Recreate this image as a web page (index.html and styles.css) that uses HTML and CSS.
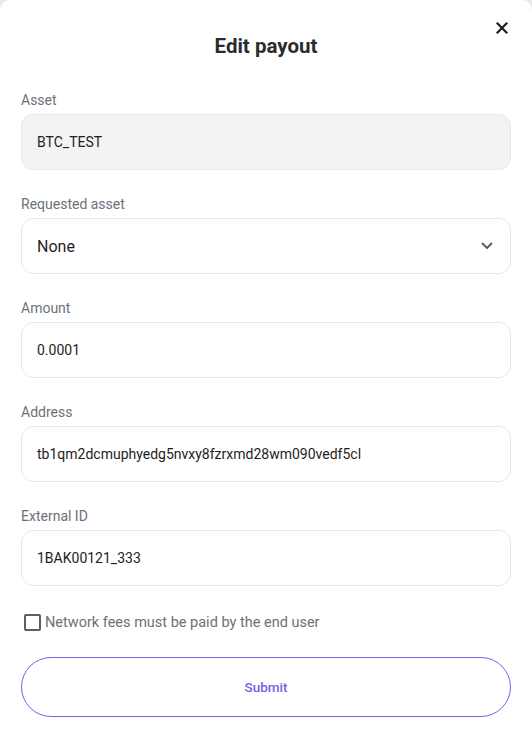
FILE: index.html
```html
<!DOCTYPE html>
<html lang="en">
<head>
<meta charset="utf-8">
<title>Edit payout</title>
<link rel="stylesheet" href="styles.css">
</head>
<body>
<div class="dialog">
  <div class="header">
    <h1 class="title">Edit payout</h1>
    <button class="close" aria-label="Close">
      <svg width="12" height="12" viewBox="0 0 12 12"><path d="M1.5 1.5L10.5 10.5M10.5 1.5L1.5 10.5" stroke="#1f1f1f" stroke-width="2.2" stroke-linecap="square"/></svg>
    </button>
  </div>
  <div class="field">
    <div class="label">Asset</div>
    <div class="box box-disabled">BTC_TEST</div>
  </div>
  <div class="field">
    <div class="label">Requested asset</div>
    <div class="box box-select"><span class="select-value">None</span>
      <svg class="chevron" width="12" height="8" viewBox="0 0 12 8"><path d="M1.5 1.5L6 6L10.5 1.5" fill="none" stroke="#5a5a5a" stroke-width="1.8" stroke-linecap="round" stroke-linejoin="round"/></svg>
    </div>
  </div>
  <div class="field">
    <div class="label">Amount</div>
    <div class="box">0.0001</div>
  </div>
  <div class="field">
    <div class="label">Address</div>
    <div class="box">tb1qm2dcmuphyedg5nvxy8fzrxmd28wm090vedf5cl</div>
  </div>
  <div class="field">
    <div class="label">External ID</div>
    <div class="box">1BAK00121_333</div>
  </div>
  <label class="check-row"><span class="checkbox"></span><span class="check-text">Network fees must be paid by the end user</span></label>
  <button class="submit">Submit</button>
</div>
</body>
</html>
```
FILE: styles.css
```css
* { box-sizing: border-box; }
html, body { margin: 0; padding: 0; }
body {
  background: #e9e9e9;
  font-family: Roboto, "Liberation Sans", Arial, sans-serif;
  width: 532px;
  height: 746px;
}
.dialog {
  background: #ffffff;
  border-radius: 10px 10px 0 0;
  width: 532px;
  height: 746px;
  padding: 30px 21px 0 21px;
}
.header {
  position: relative;
  height: 32px;
  margin-bottom: 28px;
}
.title {
  margin: 0;
  text-align: center;
  font-size: 20.5px;
  line-height: 32px;
  font-weight: 700;
  color: #2b2b2b;
}
.close {
  position: absolute;
  right: 1px;
  top: -10px;
  width: 16px;
  height: 16px;
  padding: 0;
  border: none;
  background: transparent;
  display: flex;
  align-items: center;
  justify-content: center;
}
.field { margin-bottom: 24px; }
.label {
  font-size: 14px;
  line-height: 20px;
  color: #6c7177;
  margin-bottom: 4px;
}
.box {
  height: 56px;
  border: 1px solid #e7e7e7;
  border-radius: 12px;
  padding: 0 15px;
  display: flex;
  align-items: center;
  font-size: 14px;
  color: #1e1e1e;
}
.box-disabled { background: #f3f3f3; }
.box-select { justify-content: space-between; padding-right: 17px; }
.select-value { font-size: 16px; color: #1e1e1e; }
.check-row {
  display: flex;
  align-items: center;
  margin-top: 26px;
  height: 20px;
  padding-left: 3px;
}
.checkbox {
  width: 17px;
  height: 17px;
  border: 2px solid #5f5f5f;
  border-radius: 2px;
  margin-right: 4px;
}
.check-text {
  font-size: 14.5px;
  color: #6c7177;
}
.submit {
  display: block;
  width: 100%;
  height: 60px;
  margin-top: 25px;
  border: 1px solid #7560e8;
  border-radius: 30px;
  background: #ffffff;
  color: #7560e8;
  font-family: Roboto, "Liberation Sans", Arial, sans-serif;
  font-size: 13.5px;
  font-weight: 500;
}
```
